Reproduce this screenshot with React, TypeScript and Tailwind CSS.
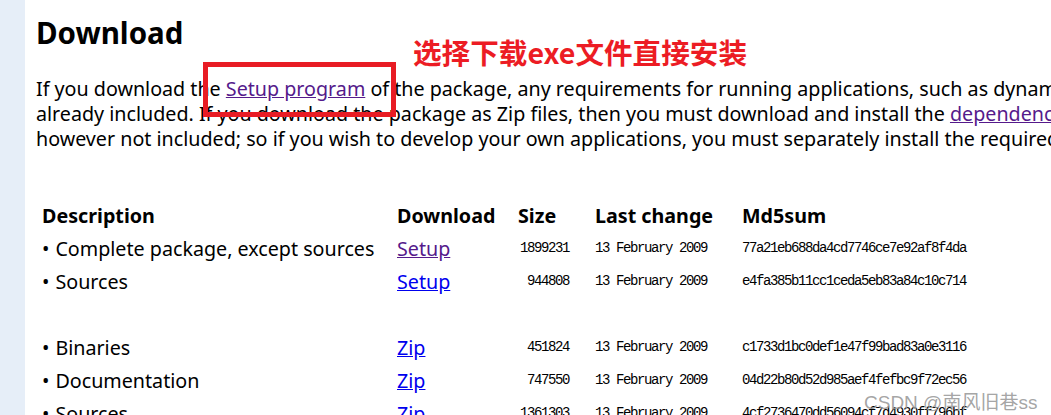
import React from 'react';

const rows = [
  { desc: 'Complete package, except sources', link: 'Setup', visited: true, size: '1899231', date: '13 February 2009', md5: '77a21eb688da4cd7746ce7e92af8f4da' },
  { desc: 'Sources', link: 'Setup', visited: false, size: '944808', date: '13 February 2009', md5: 'e4fa385b11cc1ceda5eb83a84c10c714' },
  null,
  { desc: 'Binaries', link: 'Zip', visited: false, size: '451824', date: '13 February 2009', md5: 'c1733d1bc0def1e47f99bad83a0e3116' },
  { desc: 'Documentation', link: 'Zip', visited: false, size: '747550', date: '13 February 2009', md5: '04d22b80d52d985aef4fefbc9f72ec56' },
  { desc: 'Sources', link: 'Zip', visited: false, size: '1361303', date: '13 February 2009', md5: '4cf2736470dd56094cf7d4930ff796bf' },
];

const mono = "font-['Liberation_Mono',monospace] text-[14px] tracking-[-1.4px] text-black";

export default function App() {
  return (
    <div className="relative flex h-[415px] w-[1051px] overflow-hidden bg-white font-['Noto_Sans','Noto_Sans_CJK_SC',sans-serif] text-black">
      <div className="w-[25px] shrink-0 bg-[#e6eef8]" />
      <div className="flex-1 pl-[11px]">
        <h1 className="mt-[15px] text-[29.5px] font-bold leading-[36px]">Download</h1>

        <div className="mt-[25px] whitespace-nowrap text-[19.7px] leading-[25px]">
          <p>
            If you download the <a className="text-[#551a8b] underline">Setup program</a> of the package, any requirements for running applications, such as dynamic libraries (DLL's)
          </p>
          <p>
            already included. If you download the package as Zip files, then you must download and install the <a className="text-[#551a8b] underline">dependencies</a> zip files yourself.
          </p>
          <p>however not included; so if you wish to develop your own applications, you must separately install the required packages.</p>
        </div>

        <div className="mt-[48px] grid grid-cols-[355px_121px_77px_147px_1fr] pl-[6px] text-[19.7px]">
          <div className="flex h-[33px] items-center font-bold">Description</div>
          <div className="flex h-[33px] items-center font-bold">Download</div>
          <div className="flex h-[33px] items-center font-bold">Size</div>
          <div className="flex h-[33px] items-center font-bold">Last change</div>
          <div className="flex h-[33px] items-center font-bold">Md5sum</div>
          {rows.map((r, i) =>
            r ? (
              <React.Fragment key={i}>
                <div className="flex h-[33px] items-center gap-[6px]">
                  <span>•</span>
                  <span>{r.desc}</span>
                </div>
                <div className="flex h-[33px] items-center">
                  <a className={r.visited ? 'text-[#551a8b] underline' : 'text-[#0000ee] underline'}>{r.link}</a>
                </div>
                <div className={`flex h-[33px] items-center justify-end pr-[26px] ${mono}`}>{r.size}</div>
                <div className={`flex h-[33px] items-center ${mono}`}>{r.date}</div>
                <div className={`flex h-[33px] items-center ${mono}`}>{r.md5}</div>
              </React.Fragment>
            ) : (
              <div key={i} className="col-span-5 h-[33px]" />
            )
          )}
        </div>
      </div>

      <div className="absolute left-[203px] top-[62px] h-[55px] w-[193px] border-[5px] border-[#e81c24]" />
      <div className="absolute left-[413px] top-[34px] text-[28.6px] font-bold leading-[36px] text-[#ec1c24] font-['Noto_Sans_CJK_SC',sans-serif]">
        选择下载exe文件直接安装
      </div>
      <div className="absolute left-[864px] top-[391px] text-[19px] leading-[24px] text-[#9a9a9a]/90 font-['Liberation_Sans','Noto_Sans_CJK_SC',sans-serif]">
        CSDN @南风旧巷ss
      </div>
    </div>
  );
}
